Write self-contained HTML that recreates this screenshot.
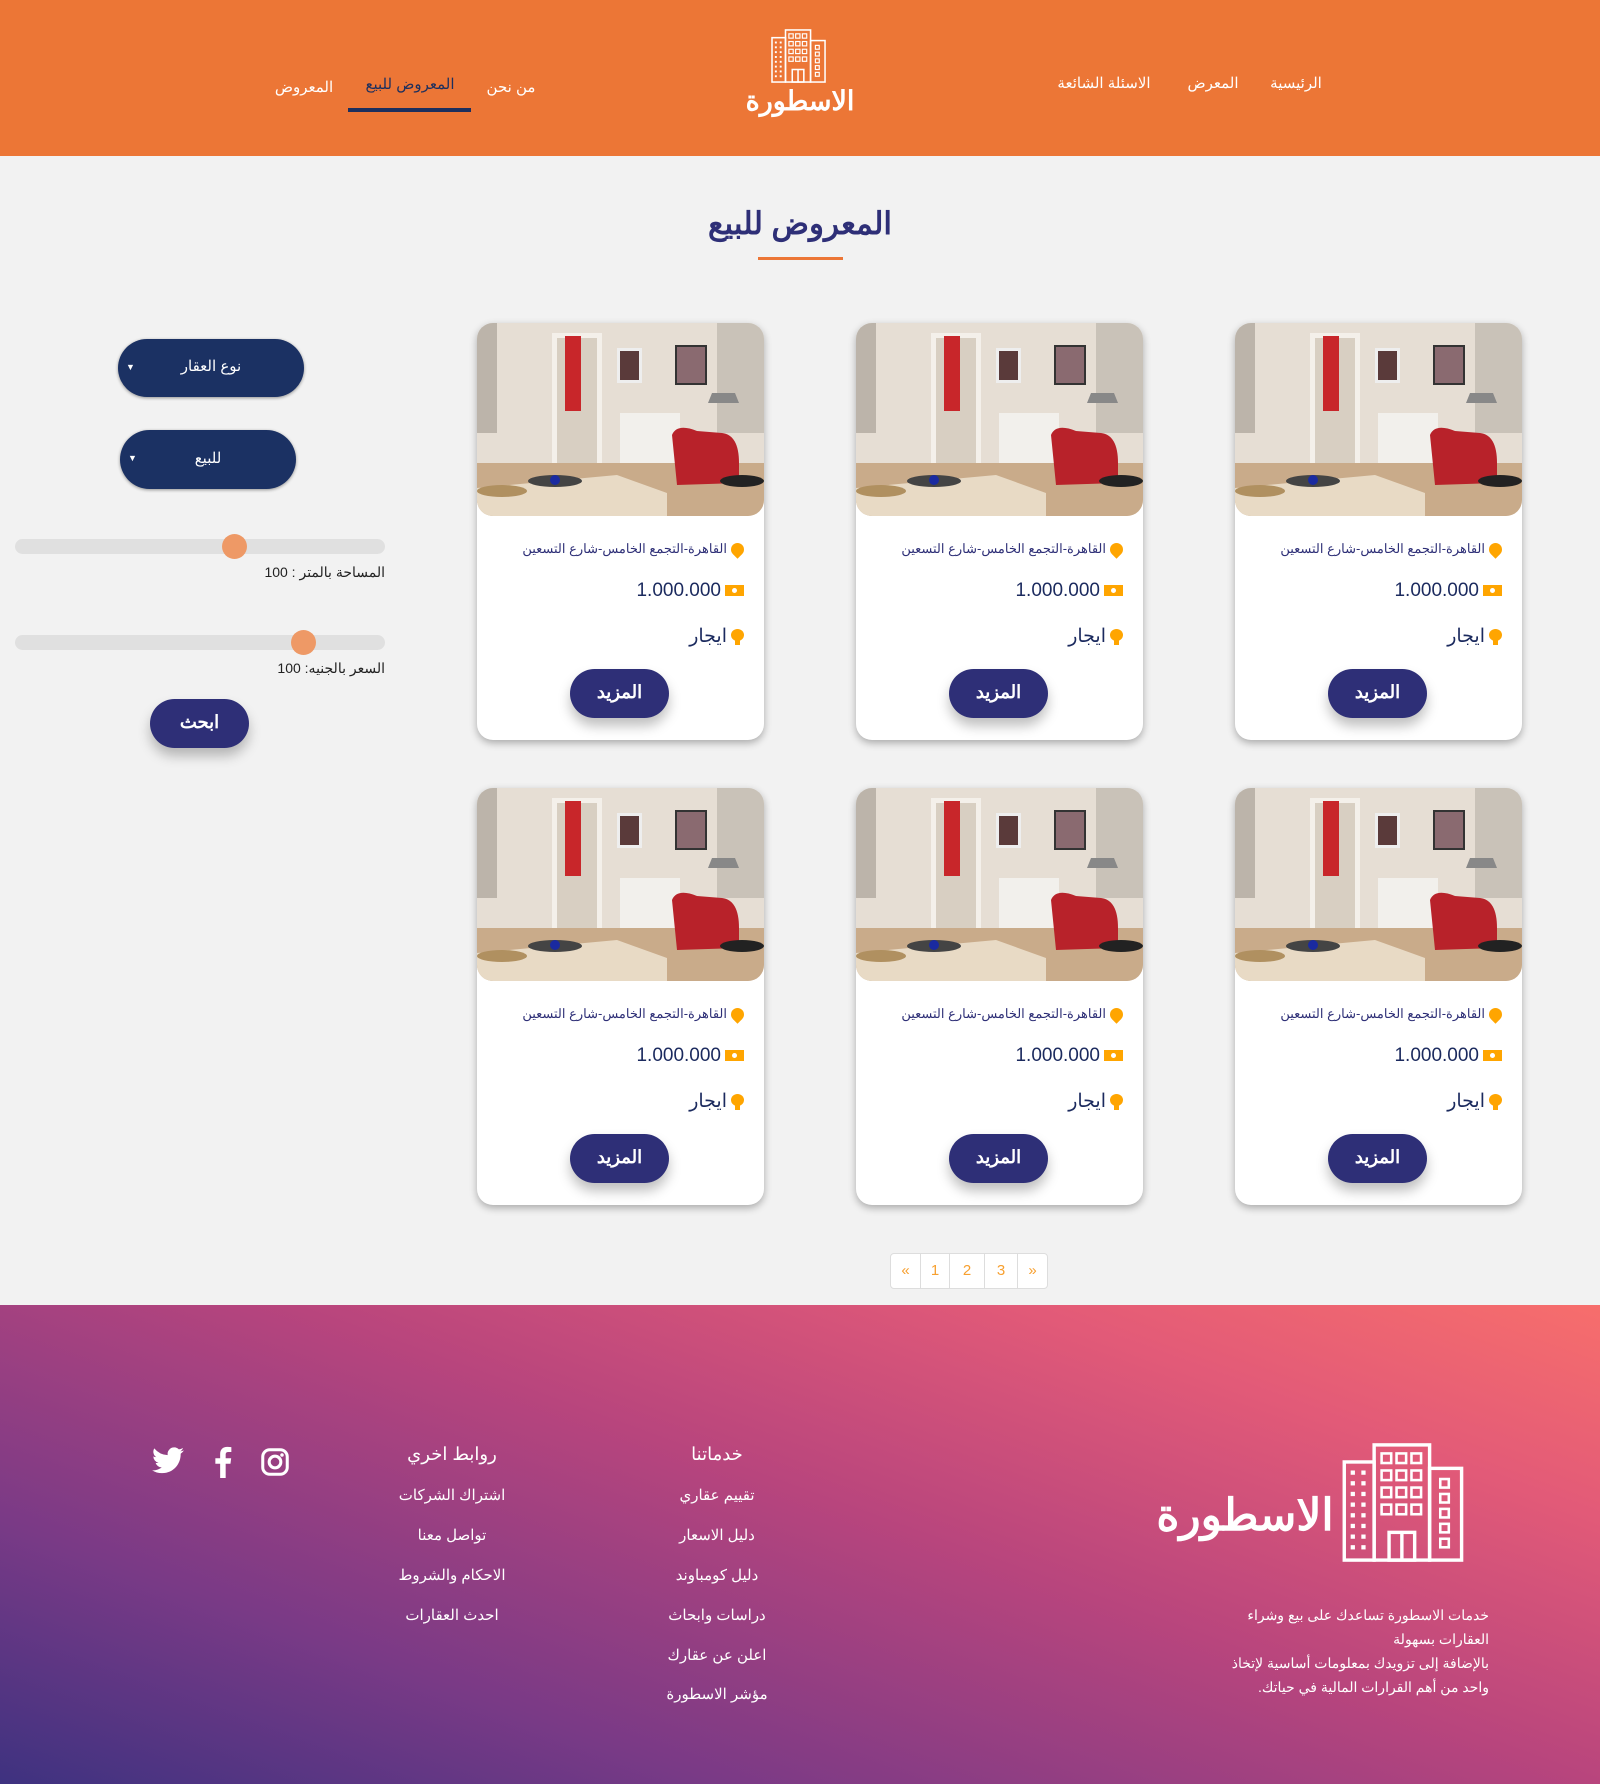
<!DOCTYPE html>
<html lang="ar" dir="rtl"><head><meta charset="utf-8">
<style>
*{margin:0;padding:0;box-sizing:border-box}
body{width:1600px;height:1784px;overflow:hidden;background:#f2f2f2;font-family:"Liberation Sans","Noto Sans CJK SC",sans-serif;position:relative;color:#2e2f77}
.abs{position:absolute}
header{position:absolute;left:0;top:0;width:1600px;height:156px;background:#ec7636}
.nav{position:absolute;color:#fff;font-size:15px;transform:translateX(-50%);white-space:nowrap}
.title{position:absolute;top:206px;left:0;width:1600px;text-align:center;font-size:31px;font-weight:bold;color:#2e2f77}
.card{position:absolute;width:287px;height:417px;background:#fff;border-radius:16px;box-shadow:0 3px 8px rgba(0,0,0,.3);overflow:hidden}
.card svg.img{position:absolute;left:0;top:0;width:287px;height:193px;border-radius:0 0 16px 16px}
.loc{position:absolute;right:20px;top:218px;font-size:13px;color:#2e2f77;white-space:nowrap}
.price{position:absolute;right:20px;top:257px;font-size:19px;color:#1b2a5e;white-space:nowrap}
.type{position:absolute;right:20px;top:302px;font-size:19px;color:#1b2a5e;white-space:nowrap}
.more{position:absolute;left:93px;top:346px;width:99px;height:49px;border-radius:25px;background:#2e2f77;color:#fff;font-size:18px;font-weight:bold;text-align:center;line-height:47px;box-shadow:0 8px 12px rgba(0,0,0,.25)}
.pin{display:inline-block;width:13px;height:13px;background:#ffa500;border-radius:50% 50% 50% 0;transform:rotate(-45deg);vertical-align:middle;margin-left:4px}
.cash{display:inline-block;width:19px;height:11px;background:#ffa500;vertical-align:middle;margin-left:4px;position:relative}
.cash:after{content:"";position:absolute;left:7px;top:3px;width:5px;height:5px;border-radius:50%;background:#fff}
.bulb{display:inline-block;width:13px;height:16px;vertical-align:middle;margin-left:4px;position:relative}
.bulb:before{content:"";position:absolute;left:0;top:0;width:13px;height:12px;border-radius:50%;background:#ffa500}
.bulb:after{content:"";position:absolute;left:4px;top:11px;width:5px;height:5px;background:#ffa500}
.sel{position:absolute;background:#1b3163;color:#fff;border-radius:30px;text-align:center;font-size:15px;box-shadow:0 1px 3px rgba(0,0,0,.4)}
.sel i{position:absolute;left:8px;font-style:normal;font-size:9px}
.track{position:absolute;left:15px;width:370px;height:15px;background:#e0e0e0;border-radius:8px}
.thumb{position:absolute;width:25px;height:25px;border-radius:50%;background:#ee9966;top:-5px}
.lab{position:absolute;right:1215px;font-size:14px;color:#222;white-space:nowrap}
footer{position:absolute;left:0;top:1305px;width:1600px;height:479px;background:linear-gradient(20deg,#3e3280 0%,#7a3a86 25%,#b8457d 55%,#e25a78 80%,#f76e6c 100%)}
.fh{position:absolute;color:#fff;font-size:18px;transform:translateX(-50%);white-space:nowrap}
.fi{position:absolute;color:#fff;font-size:15px;transform:translateX(-50%);white-space:nowrap}
.pg{position:absolute;left:890px;top:1253px;height:36px;display:flex;direction:ltr;background:#fff;border:1px solid #ddd;border-radius:4px}
.pg span{display:block;height:34px;line-height:34px;text-align:center;color:#f7a030;font-size:15px;border-right:1px solid #ddd;direction:ltr;unicode-bidi:bidi-override}
.pg span:last-child{border-right:none}
</style></head><body>
<svg width="0" height="0" style="position:absolute">
<defs>
<symbol id="bld" viewBox="0 0 60 56">
<g fill="none" stroke="#fff" stroke-width="1.6">
<rect x="16" y="1" width="26" height="54"/>
<rect x="2" y="9" width="14" height="46"/>
<rect x="42" y="12" width="15" height="43"/>
<rect x="23" y="42" width="12" height="13"/><line x1="29" y1="42" x2="29" y2="55"/>
<g stroke-width="1.2">
<rect x="19.5" y="5" width="4.5" height="4.5"/><rect x="26.5" y="5" width="4.5" height="4.5"/><rect x="33.5" y="5" width="4.5" height="4.5"/>
<rect x="19.5" y="13" width="4.5" height="4.5"/><rect x="26.5" y="13" width="4.5" height="4.5"/><rect x="33.5" y="13" width="4.5" height="4.5"/>
<rect x="19.5" y="21" width="4.5" height="4.5"/><rect x="26.5" y="21" width="4.5" height="4.5"/><rect x="33.5" y="21" width="4.5" height="4.5"/>
<rect x="19.5" y="29" width="4.5" height="4.5"/><rect x="26.5" y="29" width="4.5" height="4.5"/><rect x="33.5" y="29" width="4.5" height="4.5"/>
<rect x="47" y="17" width="4" height="4"/><rect x="47" y="24" width="4" height="4"/><rect x="47" y="31" width="4" height="4"/><rect x="47" y="38" width="4" height="4"/><rect x="47" y="45" width="4" height="4"/>
</g></g>
<g fill="#fff"><rect x="5" y="13" width="2" height="2"/><rect x="10" y="13" width="2" height="2"/><rect x="5" y="18" width="2" height="2"/><rect x="10" y="18" width="2" height="2"/><rect x="5" y="23" width="2" height="2"/><rect x="10" y="23" width="2" height="2"/><rect x="5" y="28" width="2" height="2"/><rect x="10" y="28" width="2" height="2"/><rect x="5" y="33" width="2" height="2"/><rect x="10" y="33" width="2" height="2"/><rect x="5" y="38" width="2" height="2"/><rect x="10" y="38" width="2" height="2"/><rect x="5" y="43" width="2" height="2"/><rect x="10" y="43" width="2" height="2"/><rect x="5" y="48" width="2" height="2"/><rect x="10" y="48" width="2" height="2"/></g>
</symbol>
<symbol id="room" viewBox="0 0 287 193" preserveAspectRatio="none">
<rect width="287" height="193" fill="#e6ded4"/>
<rect x="0" y="0" width="20" height="110" fill="#bcb4aa"/>
<rect x="75" y="10" width="50" height="140" fill="#f4f0ea"/>
<rect x="80" y="15" width="40" height="130" fill="#d8cfc2"/>
<rect x="88" y="13" width="16" height="75" fill="#c8262a"/>
<rect x="140" y="25" width="25" height="35" fill="#eee"/><rect x="143" y="28" width="19" height="29" fill="#5a3a3a"/>
<rect x="198" y="22" width="32" height="40" fill="#333"/><rect x="200" y="24" width="28" height="36" fill="#8a6a70"/>
<rect x="240" y="0" width="47" height="110" fill="#c9c2b8"/>
<path d="M235 70 L258 70 L262 80 L231 80Z" fill="#888"/>
<rect x="143" y="90" width="60" height="65" fill="#f2f0ec"/>
<rect x="0" y="140" width="287" height="53" fill="#c9ab8a"/>
<path d="M195 112 Q200 100 220 108 L245 110 Q262 112 262 140 L262 160 L200 162 Z" fill="#b8222a"/>
<ellipse cx="265" cy="158" rx="22" ry="6" fill="#222"/>
<path d="M0 165 L140 152 L190 170 L190 193 L0 193Z" fill="#e8dac5"/>
<ellipse cx="78" cy="158" rx="27" ry="6" fill="#444"/>
<circle cx="78" cy="157" r="5" fill="#1a2aa0"/>
<ellipse cx="25" cy="168" rx="25" ry="6" fill="#b09060"/>
</symbol>
</defs></svg>

<header>
<span class="nav" style="left:1296px;top:74px">الرئيسية</span>
<span class="nav" style="left:1213px;top:74px">المعرض</span>
<span class="nav" style="left:1104px;top:74px">الاسئلة الشائعة</span>
<span class="nav" style="left:511px;top:78px">من نحن</span>
<span class="nav" style="left:410px;top:75px;color:#1c2f5e">المعروض للبيع</span>
<span class="nav" style="left:304px;top:78px">المعروض</span>
<div class="abs" style="left:348px;top:108px;width:123px;height:4px;background:#1c2f5e"></div>
<svg class="abs" style="left:770px;top:29px" width="58" height="54"><use href="#bld"/></svg>
<div class="abs" style="left:740px;top:86px;width:120px;text-align:center;color:#fff;font-size:27px;font-weight:bold">الاسطورة</div>
</header>

<div class="title">المعروض للبيع</div>
<div class="abs" style="left:758px;top:257px;width:85px;height:3px;background:#ec7636"></div>

<div class="sel" style="left:118px;top:339px;width:186px;height:58px;line-height:56px">نوع العقار<i>▼</i></div>
<div class="sel" style="left:120px;top:430px;width:176px;height:59px;line-height:57px">للبيع<i>▼</i></div>
<div class="track" style="top:539px"><div class="thumb" style="left:207px"></div></div>
<div class="lab" style="top:564px">المساحة بالمتر : 100</div>
<div class="track" style="top:635px"><div class="thumb" style="left:276px"></div></div>
<div class="lab" style="top:660px">السعر بالجنيه: 100</div>
<div class="abs" style="left:150px;top:699px;width:99px;height:49px;border-radius:25px;background:#2e2f77;color:#fff;font-size:18px;font-weight:bold;text-align:center;line-height:47px;box-shadow:0 8px 12px rgba(0,0,0,.25)">ابحث</div>

<div class="card" style="left:1235px;top:323px"><svg class="img"><use href="#room"/></svg><div class="loc"><span class="pin"></span>القاهرة-التجمع الخامس-شارع التسعين</div><div class="price"><span class="cash"></span>1.000.000</div><div class="type"><span class="bulb"></span>ايجار</div><div class="more">المزيد</div></div>
<div class="card" style="left:856px;top:323px"><svg class="img"><use href="#room"/></svg><div class="loc"><span class="pin"></span>القاهرة-التجمع الخامس-شارع التسعين</div><div class="price"><span class="cash"></span>1.000.000</div><div class="type"><span class="bulb"></span>ايجار</div><div class="more">المزيد</div></div>
<div class="card" style="left:477px;top:323px"><svg class="img"><use href="#room"/></svg><div class="loc"><span class="pin"></span>القاهرة-التجمع الخامس-شارع التسعين</div><div class="price"><span class="cash"></span>1.000.000</div><div class="type"><span class="bulb"></span>ايجار</div><div class="more">المزيد</div></div>
<div class="card" style="left:1235px;top:788px"><svg class="img"><use href="#room"/></svg><div class="loc"><span class="pin"></span>القاهرة-التجمع الخامس-شارع التسعين</div><div class="price"><span class="cash"></span>1.000.000</div><div class="type"><span class="bulb"></span>ايجار</div><div class="more">المزيد</div></div>
<div class="card" style="left:856px;top:788px"><svg class="img"><use href="#room"/></svg><div class="loc"><span class="pin"></span>القاهرة-التجمع الخامس-شارع التسعين</div><div class="price"><span class="cash"></span>1.000.000</div><div class="type"><span class="bulb"></span>ايجار</div><div class="more">المزيد</div></div>
<div class="card" style="left:477px;top:788px"><svg class="img"><use href="#room"/></svg><div class="loc"><span class="pin"></span>القاهرة-التجمع الخامس-شارع التسعين</div><div class="price"><span class="cash"></span>1.000.000</div><div class="type"><span class="bulb"></span>ايجار</div><div class="more">المزيد</div></div>

<div class="pg"><span style="width:30px">&laquo;</span><span style="width:29px">1</span><span style="width:35px">2</span><span style="width:33px">3</span><span style="width:29px">&raquo;</span></div>

<footer>
<svg class="abs" style="left:1340px;top:135px" width="128" height="125"><use href="#bld"/></svg>
<div class="abs" style="left:1150px;top:185px;width:190px;text-align:center;color:#fff;font-size:44px;font-weight:bold">الاسطورة</div>
<div class="abs" style="right:111px;top:298px;width:400px;color:#fff;font-size:14px;line-height:24px;text-align:right;white-space:nowrap">خدمات الاسطورة تساعدك على بيع وشراء<br>العقارات بسهولة<br>بالإضافة إلى تزويدك بمعلومات أساسية لإتخاذ<br>واحد من أهم القرارات المالية في حياتك.</div>
<div class="fh" style="left:717px;top:139px">خدماتنا</div>
<div class="fi" style="left:717px;top:181px">تقييم عقاري</div>
<div class="fi" style="left:717px;top:221px">دليل الاسعار</div>
<div class="fi" style="left:717px;top:261px">دليل كومباوند</div>
<div class="fi" style="left:717px;top:301px">دراسات وابحاث</div>
<div class="fi" style="left:717px;top:341px">اعلن عن عقارك</div>
<div class="fi" style="left:717px;top:380px">مؤشر الاسطورة</div>
<div class="fh" style="left:452px;top:139px">روابط اخري</div>
<div class="fi" style="left:452px;top:181px">اشتراك الشركات</div>
<div class="fi" style="left:452px;top:221px">تواصل معنا</div>
<div class="fi" style="left:452px;top:261px">الاحكام والشروط</div>
<div class="fi" style="left:452px;top:301px">احدث العقارات</div>
<svg class="abs" style="left:152px;top:142px" width="32" height="27" viewBox="0 0 24 20"><path fill="#fff" d="M24 2.4a9.8 9.8 0 0 1-2.8.8A4.9 4.9 0 0 0 23.3.5a9.8 9.8 0 0 1-3.1 1.2A4.9 4.9 0 0 0 11.8 6 14 14 0 0 1 1.7.9a4.9 4.9 0 0 0 1.5 6.6A4.9 4.9 0 0 1 1 6.9a4.9 4.9 0 0 0 3.9 4.8 4.9 4.9 0 0 1-2.2.1 4.9 4.9 0 0 0 4.6 3.4A9.9 9.9 0 0 1 0 17.3 14 14 0 0 0 7.5 19.5c9.1 0 14-7.5 14-14v-.6A10 10 0 0 0 24 2.4z"/></svg>
<svg class="abs" style="left:214px;top:141px" width="18" height="32" viewBox="0 0 10 18"><path fill="#fff" d="M6.5 18V10h2.7l.4-3.1H6.5V4.9c0-.9.3-1.5 1.6-1.5h1.6V.6A22 22 0 0 0 7.3.5C5 .5 3.4 1.9 3.4 4.5v2.4H.7V10h2.7v8z"/></svg>
<svg class="abs" style="left:261px;top:143px" width="28" height="28" viewBox="0 0 24 24"><rect x="1.5" y="1.5" width="21" height="21" rx="6" fill="none" stroke="#fff" stroke-width="2.6"/><circle cx="12" cy="12" r="5" fill="none" stroke="#fff" stroke-width="2.6"/><circle cx="18" cy="6" r="1.5" fill="#fff"/></svg>
</footer>
</body></html>
